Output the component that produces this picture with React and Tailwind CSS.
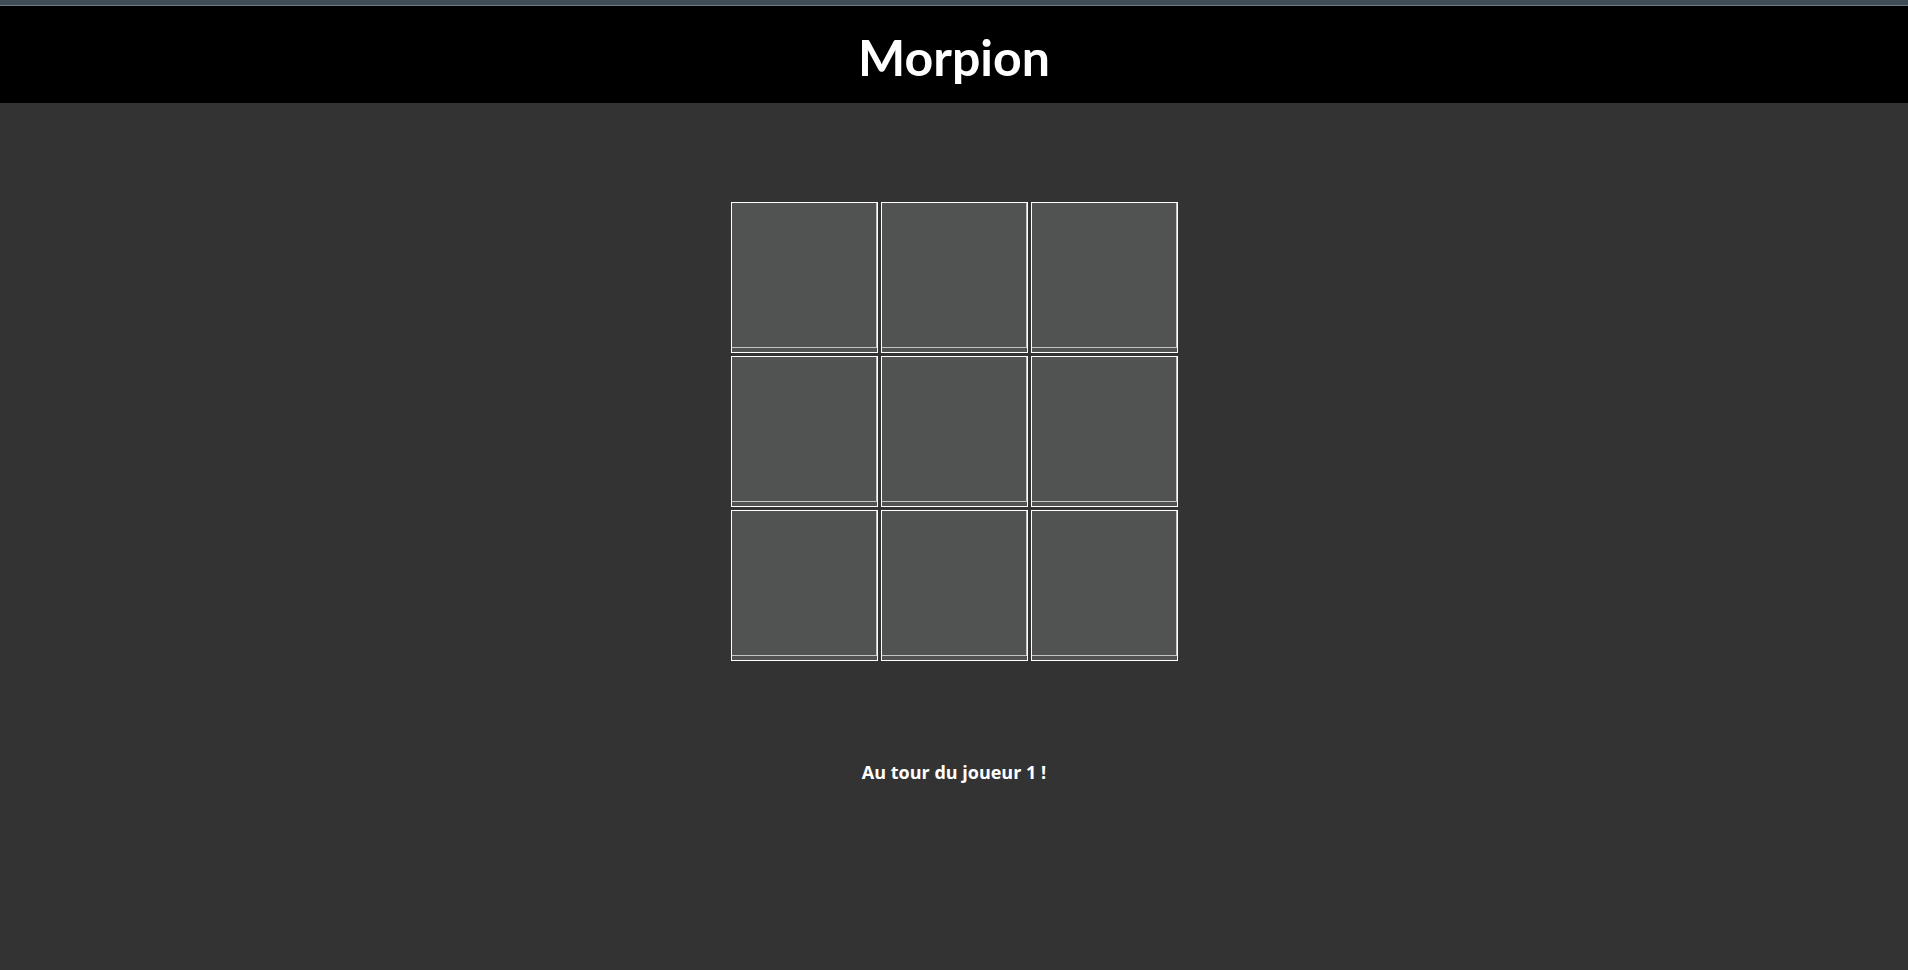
import React, { useState } from 'react';

const Cell = ({ value, onClick }) => (
  <div className="w-[147px] h-[151px] border border-white bg-[#515352]">
    <button
      onClick={onClick}
      className="block w-full h-[145px] border-r border-b border-[#c4c4c4] bg-[#515352] text-white text-6xl font-bold cursor-pointer"
    >
      {value}
    </button>
  </div>
);

const App = () => {
  const [cells, setCells] = useState(Array(9).fill(''));
  const [player, setPlayer] = useState(1);

  const play = (i) => {
    if (cells[i]) return;
    const next = [...cells];
    next[i] = player === 1 ? 'X' : 'O';
    setCells(next);
    setPlayer(player === 1 ? 2 : 1);
  };

  return (
    <div className="min-h-screen bg-[#333333] text-white font-['Lato','Liberation_Sans',sans-serif]">
      <div className="h-[6px] bg-[#3f4d57] border-b border-[#6d7b86]" />
      <header className="h-[97px] bg-black flex items-center justify-center">
        <h1 className="text-[50px] font-bold leading-none mt-[4px]">Morpion</h1>
      </header>
      <main className="flex flex-col items-center pt-[99px]">
        <div className="grid grid-cols-3 gap-[3px]">
          {cells.map((c, i) => (
            <Cell key={i} value={c} onClick={() => play(i)} />
          ))}
        </div>
        <p className="mt-[98px] text-[18px] font-bold font-['Open_Sans','Liberation_Sans',sans-serif]">
          Au tour du joueur {player} !
        </p>
      </main>
    </div>
  );
};

export default App;
